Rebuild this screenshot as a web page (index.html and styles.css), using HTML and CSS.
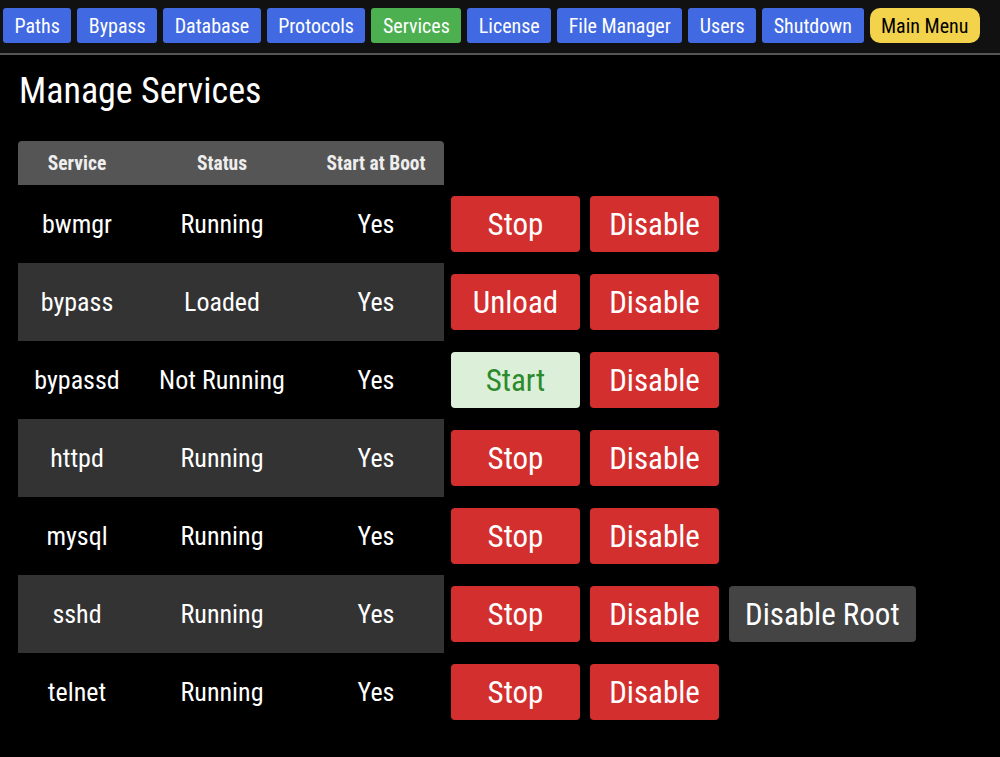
FILE: index.html
```html
<!DOCTYPE html>
<html lang="en">
<head>
    <meta charset="UTF-8">
    <title>Manage Services</title>
    <link rel="stylesheet" href="styles.css">
</head>
<body>
    <nav class="top-menu">
        <a class="nav-btn">Paths</a>
        <a class="nav-btn">Bypass</a>
        <a class="nav-btn">Database</a>
        <a class="nav-btn">Protocols</a>
        <a class="nav-btn active">Services</a>
        <a class="nav-btn">License</a>
        <a class="nav-btn">File Manager</a>
        <a class="nav-btn">Users</a>
        <a class="nav-btn">Shutdown</a>
        <a class="nav-btn main">Main Menu</a>
    </nav>

    <div class="content">
        <h1>Manage Services</h1>
        <table class="services">
            <thead>
                <tr>
                    <th class="col-service">Service</th>
                    <th class="col-status">Status</th>
                    <th class="col-boot">Start at Boot</th>
                    <th class="col-actions"></th>
                </tr>
            </thead>
            <tbody>
                <tr>
                    <td>bwmgr</td><td>Running</td><td>Yes</td>
                    <td class="actions"><button class="btn red">Stop</button><button class="btn red">Disable</button></td>
                </tr>
                <tr>
                    <td>bypass</td><td>Loaded</td><td>Yes</td>
                    <td class="actions"><button class="btn red">Unload</button><button class="btn red">Disable</button></td>
                </tr>
                <tr>
                    <td>bypassd</td><td>Not Running</td><td>Yes</td>
                    <td class="actions"><button class="btn start">Start</button><button class="btn red">Disable</button></td>
                </tr>
                <tr>
                    <td>httpd</td><td>Running</td><td>Yes</td>
                    <td class="actions"><button class="btn red">Stop</button><button class="btn red">Disable</button></td>
                </tr>
                <tr>
                    <td>mysql</td><td>Running</td><td>Yes</td>
                    <td class="actions"><button class="btn red">Stop</button><button class="btn red">Disable</button></td>
                </tr>
                <tr>
                    <td>sshd</td><td>Running</td><td>Yes</td>
                    <td class="actions"><button class="btn red">Stop</button><button class="btn red">Disable</button><button class="btn gray">Disable Root</button></td>
                </tr>
                <tr>
                    <td>telnet</td><td>Running</td><td>Yes</td>
                    <td class="actions"><button class="btn red">Stop</button><button class="btn red">Disable</button></td>
                </tr>
            </tbody>
        </table>
    </div>
</body>
</html>
```

FILE: styles.css
```css
* {
    margin: 0;
    padding: 0;
    box-sizing: border-box;
}

body {
    font-family: "Roboto Condensed", "Liberation Sans Narrow", Roboto, sans-serif;
    font-stretch: condensed;
    background-color: #000;
    color: #fff;
}

/* top navigation */
.top-menu {
    display: flex;
    gap: 6px;
    padding: 8px 3px 10px;
    background-color: #111;
    border-bottom: 2px solid #555;
}

.nav-btn {
    display: flex;
    align-items: center;
    height: 35px;
    padding: 0 11.5px;
    font-size: 20px;
    color: #fff;
    background-color: #4169e1;
    border-radius: 3px;
    text-decoration: none;
}

.nav-btn.active {
    background-color: #4caf50;
}

.nav-btn.main {
    background-color: #f2d34b;
    color: #000;
    border-radius: 10px;
}

.content {
    padding: 15px 18px;
}

.content h1 {
    font-size: 36px;
    font-weight: normal;
    margin-bottom: 29px;
    margin-left: 1px;
}

/* services table */
.services {
    border-collapse: collapse;
}

.services th {
    height: 44px;
    font-size: 19.5px;
    font-weight: bold;
    color: #eee;
    background-color: #555;
}

.services th.col-service { width: 118px; border-top-left-radius: 4px; }
.services th.col-status { width: 172px; }
.services th.col-boot { width: 136px; border-top-right-radius: 4px; }
.services th.col-actions { background: none; }

.services td {
    height: 78px;
    font-size: 26px;
    text-align: center;
}

.services tbody tr:nth-child(even) td {
    background-color: #333;
}

.services tbody tr td.actions {
    background: none;
    text-align: left;
    padding-left: 7px;
    white-space: nowrap;
}

.btn {
    height: 56px;
    min-width: 129px;
    padding: 0 16px;
    margin-right: 10px;
    font-family: inherit;
    font-stretch: condensed;
    font-size: 31px;
    color: #fff;
    border: none;
    border-radius: 4px;
    vertical-align: middle;
}

.btn.red { background-color: #d32f2f; }
.btn.start { background-color: #dcefd9; color: #2c8a2c; }
.btn.gray { background-color: #444; }
```
